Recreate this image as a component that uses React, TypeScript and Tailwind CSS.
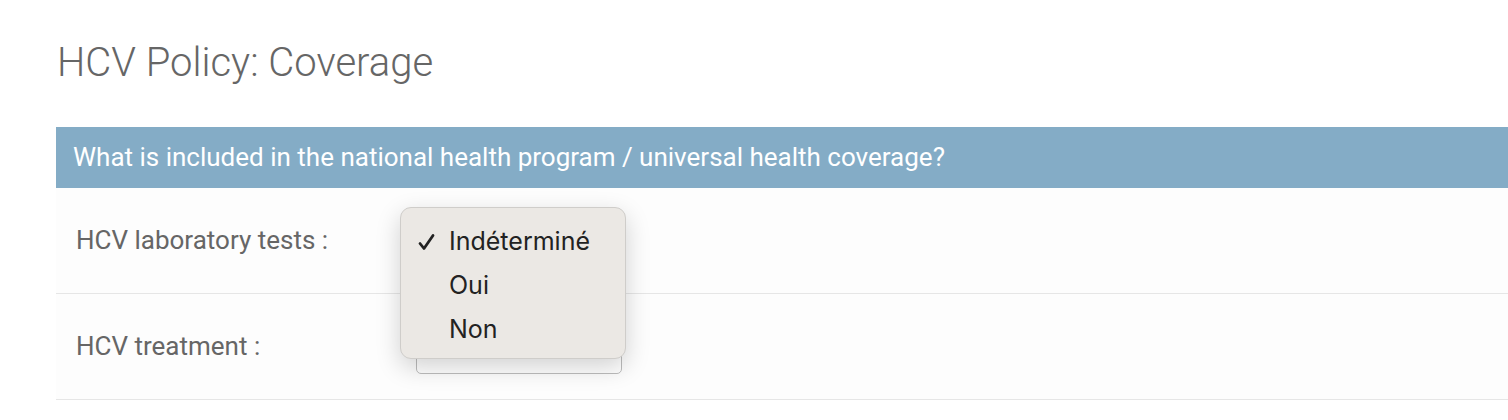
import React from "react";

const rows = ["HCV laboratory tests :", "HCV treatment :"];
const options = ["Indéterminé", "Oui", "Non"];

function SelectBox() {
  return <div className="w-[206px] h-[55px] rounded-[5px] border border-[#bdbdbd] bg-white" />;
}

export default function App() {
  return (
    <div className="relative w-full h-[420px] overflow-hidden bg-white font-['Roboto',sans-serif]">
      <h1 className="pl-[57px] pt-[40px] text-[40px] leading-[46px] font-light text-[#666]">HCV Policy: Coverage</h1>

      <div className="ml-[56px] mt-[41px]">
        <div className="h-[61px] bg-[#84acc6] flex items-center pl-[17px] text-[26px] text-white">
          What is included in the national health program / universal health coverage?
        </div>
        {rows.map((label) => (
          <div key={label} className="h-[106px] bg-[#fdfdfd] border-b border-[#e6e6e6] flex items-center pl-[20px]">
            <span className="w-[340px] text-[26px] text-[#666]">{label}</span>
            <SelectBox />
          </div>
        ))}
      </div>

      {/* open native dropdown */}
      <div className="absolute left-[400px] top-[207px] w-[226px] h-[152px] rounded-[11px] border border-[#cfcdca] bg-[#ebe8e4] shadow-[0_8px_24px_rgba(0,0,0,0.18)] pt-[12px] font-['Inter',sans-serif] text-[25px] text-[#222]">
        {options.map((opt, i) => (
          <div key={opt} className="h-[44px] flex items-center">
            <span className="w-[48px] flex justify-end pr-[14px]">
              {i === 0 && (
                <svg width="17" height="18" viewBox="0 0 17 18" fill="none" stroke="#222" strokeWidth="2.8" strokeLinecap="round" strokeLinejoin="round">
                  <path d="M2 10.5 L6 15.5 L15 2.5" />
                </svg>
              )}
            </span>
            <span>{opt}</span>
          </div>
        ))}
      </div>
    </div>
  );
}
